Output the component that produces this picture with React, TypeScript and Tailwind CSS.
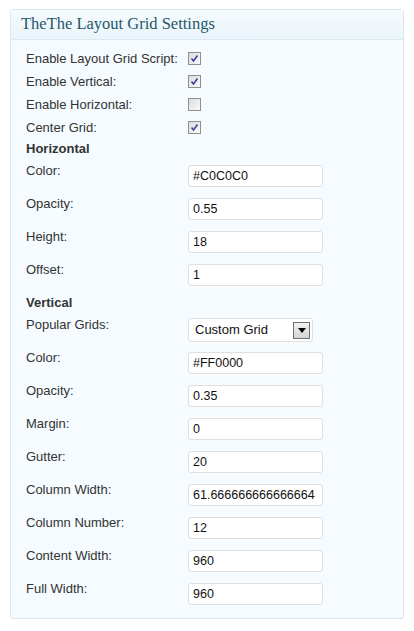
import React from 'react';

const checks = [
  { label: 'Enable Layout Grid Script:', on: true },
  { label: 'Enable Vertical:', on: true },
  { label: 'Enable Horizontal:', on: false },
  { label: 'Center Grid:', on: true },
];

const horizontal = [
  { label: 'Color:', value: '#C0C0C0' },
  { label: 'Opacity:', value: '0.55' },
  { label: 'Height:', value: '18' },
  { label: 'Offset:', value: '1' },
];

const vertical = [
  { label: 'Color:', value: '#FF0000' },
  { label: 'Opacity:', value: '0.35' },
  { label: 'Margin:', value: '0' },
  { label: 'Gutter:', value: '20' },
  { label: 'Column Width:', value: '61.666666666666664' },
  { label: 'Column Number:', value: '12' },
  { label: 'Content Width:', value: '960' },
  { label: 'Full Width:', value: '960' },
];

const CheckBox: React.FC<{ on: boolean }> = ({ on }) => (
  <span className="flex h-[13px] w-[13px] items-center justify-center border border-[#8f8f8f] bg-gradient-to-br from-[#dcdcdc] to-[#fbfbfb]">
    {on && (
      <svg width="9" height="9" viewBox="0 0 9 9">
        <path d="M1.5 4.5 L3.5 7 L7.5 1.5" fill="none" stroke="#3b3fa6" strokeWidth="1.6" />
      </svg>
    )}
  </span>
);

const Field: React.FC<{ label: string; value: string }> = ({ label, value }) => (
  <div className="flex h-[33px] items-start">
    <div className="w-[162px] leading-[15px]">{label}</div>
    <div className="mt-[2px] flex h-[22px] w-[135px] items-center overflow-hidden whitespace-nowrap rounded-[3px] border border-[#dfdfdf] bg-white px-[4px] text-[12.5px] text-[#111]">
      {value}
    </div>
  </div>
);

const Heading: React.FC<{ children: React.ReactNode }> = ({ children }) => (
  <div className="h-[22px] font-bold leading-[15px]">{children}</div>
);

export default function App() {
  return (
    <div className="min-h-screen bg-white pt-[9px] pl-[10px] font-['Liberation_Sans',Arial,sans-serif] text-[13px] text-[#333]">
      <div className="w-[394px] rounded-[3px] border border-[#dde8ee] bg-[#f5fbfe]">
        <div className="flex h-[30px] items-center border-b border-[#dde8ee] bg-gradient-to-b from-[#f6fbfe] to-[#eaf4fa] pl-[10px] font-['Liberation_Serif',Georgia,serif] text-[16.5px] text-[#24596a]">
          TheThe Layout Grid Settings
        </div>
        <div className="pl-[15px] pt-[7px] pb-[4px]">
          {checks.map((c) => (
            <div key={c.label} className="flex h-[23px] items-center">
              <div className="w-[162px]">{c.label}</div>
              <CheckBox on={c.on} />
            </div>
          ))}
          <div className="mt-[2px]">
            <Heading>Horizontal</Heading>
          </div>
          {horizontal.map((f) => (
            <Field key={f.label} {...f} />
          ))}
          <Heading>Vertical</Heading>
          <div className="flex h-[33px] items-start">
            <div className="w-[162px] leading-[15px]">Popular Grids:</div>
            <div className="mt-[1px] flex h-[24px] w-[125px] items-center justify-between rounded-[3px] border border-[#dfdfdf] bg-white pl-[6px] pr-[2px] text-[13px] text-[#111]">
              <span>Custom Grid</span>
              <span className="flex h-[17px] w-[17px] items-center justify-center border border-[#6f6f6f] bg-gradient-to-b from-[#f2f2f2] to-[#d4d4d4]">
                <svg width="8" height="5" viewBox="0 0 8 5">
                  <path d="M0 0 H8 L4 5 Z" fill="#000" />
                </svg>
              </span>
            </div>
          </div>
          {vertical.map((f) => (
            <Field key={f.label + f.value} {...f} />
          ))}
        </div>
      </div>
    </div>
  );
}
